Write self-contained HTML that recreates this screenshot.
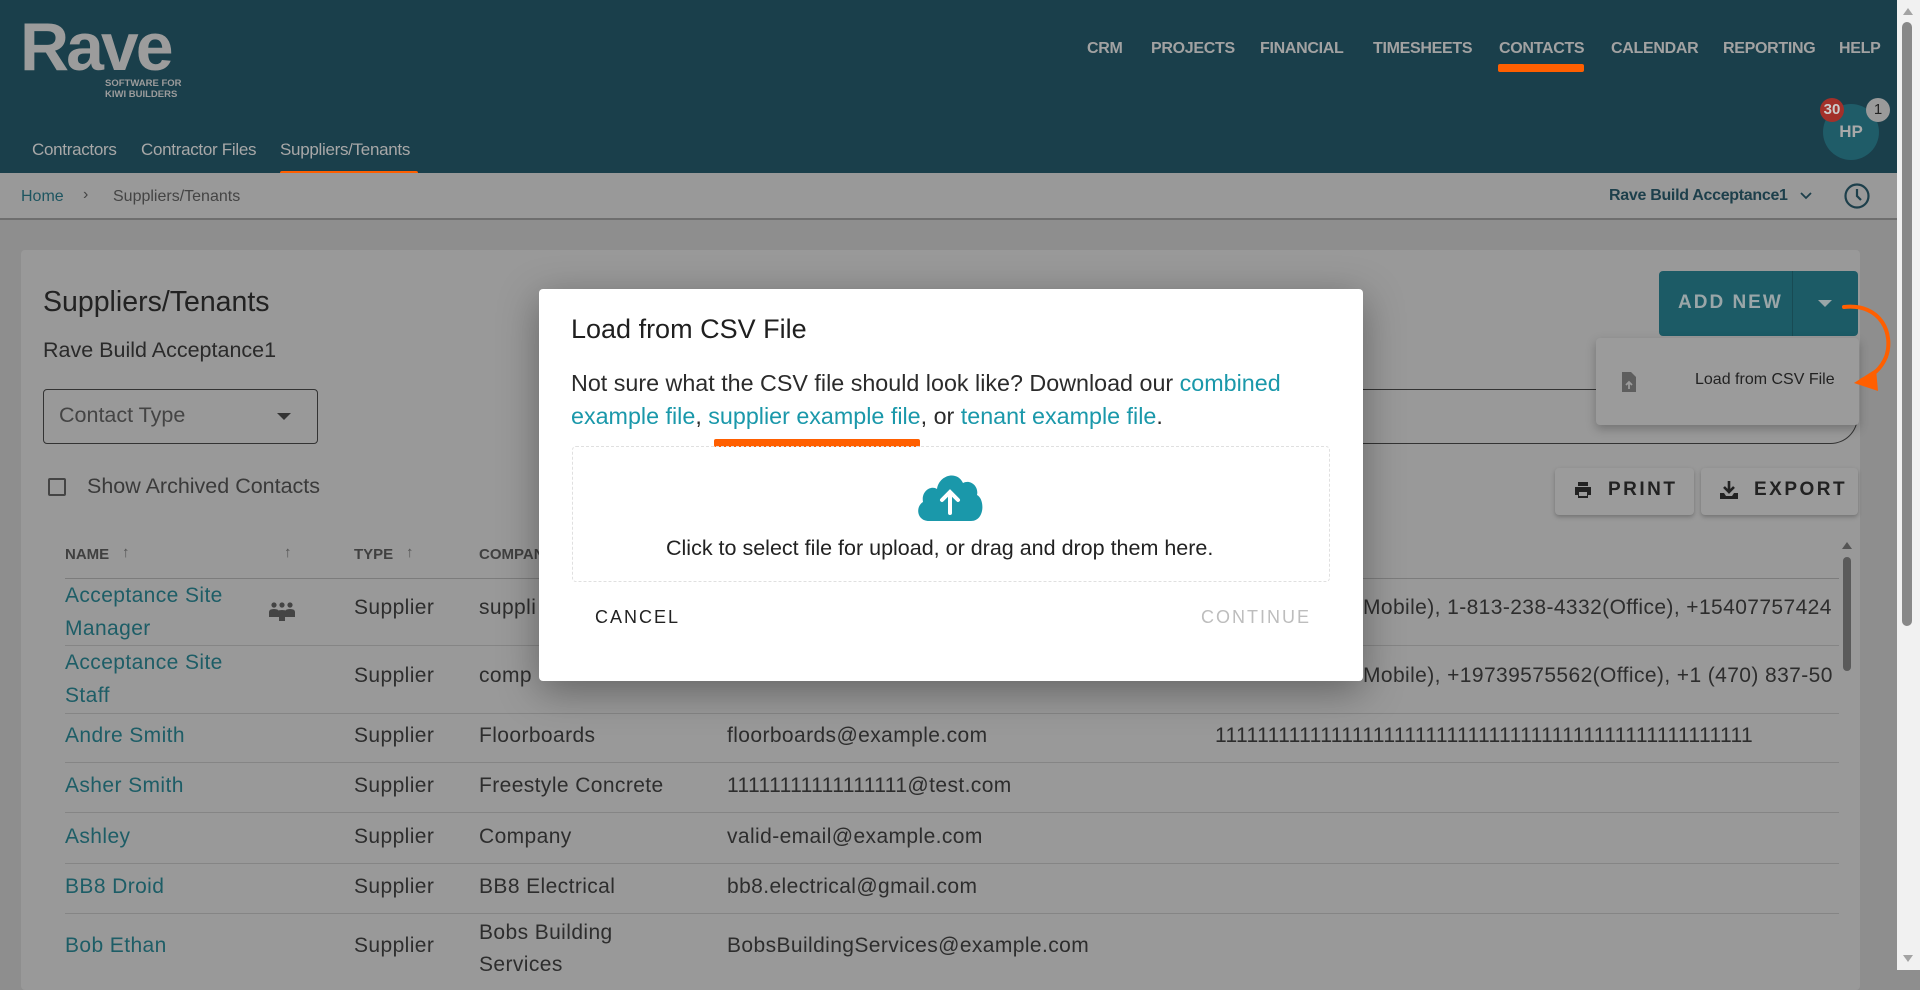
<!DOCTYPE html>
<html><head><meta charset="utf-8"><style>
*{margin:0;padding:0;box-sizing:border-box}
body{width:1920px;height:970px;overflow:hidden;background:#8e8e8e;font-family:"Liberation Sans",Arial,sans-serif;position:relative;color:#2b2b2b}
.a{position:absolute;white-space:nowrap}
.hdr{position:absolute;left:0;top:0;width:1897px;height:173px;background:#1a3f4b}
.nav{top:40px;font-size:16px;font-weight:bold;color:#a2a2a2;letter-spacing:-0.3px}
.sub{top:140px;font-size:17px;color:#a8a8a8;letter-spacing:-0.3px}
.bc{position:absolute;left:0;top:173px;width:1897px;height:47px;background:#999;border-bottom:2px solid #6e6e6e}
.card{position:absolute;left:21px;top:250px;width:1839px;height:740px;background:#999;border-radius:4px}
.th{top:546px;font-size:15px;font-weight:bold;color:#404040}
.ln{position:absolute;left:65px;width:1774px;height:1px;background:#858585}
.td{font-size:21px;letter-spacing:.4px;color:#2d2d2d}
.lk{font-size:21px;letter-spacing:.4px;color:#1d5d66}
.modal{position:absolute;left:539px;top:289px;width:824px;height:392px;background:#fff;border-radius:4px;box-shadow:0 10px 40px rgba(0,0,0,.35)}
.l{color:#1a98aa}
</style></head><body>
<div class="hdr"></div>
<div class="a" style="left:20px;top:8px;font-size:68px;font-weight:bold;color:#9c9c9c;letter-spacing:-3px">Rave</div>
<div class="a" style="left:105px;top:78px;font-size:9.5px;font-weight:bold;color:#9c9c9c;line-height:11px">SOFTWARE FOR<br>KIWI BUILDERS</div>
<div class="a nav" style="left:1087px">CRM</div>
<div class="a nav" style="left:1151px">PROJECTS</div>
<div class="a nav" style="left:1260px">FINANCIAL</div>
<div class="a nav" style="left:1373px">TIMESHEETS</div>
<div class="a nav" style="left:1499px">CONTACTS</div>
<div class="a nav" style="left:1611px">CALENDAR</div>
<div class="a nav" style="left:1723px">REPORTING</div>
<div class="a nav" style="left:1839px">HELP</div>
<div class="a" style="left:1498px;top:64px;width:86px;height:8px;background:#ff5f00;border-radius:2px"></div>
<div class="a" style="left:1823px;top:104px;width:56px;height:56px;border-radius:50%;background:#1f5c68;color:#a9a9a9;font-weight:bold;font-size:17px;text-align:center;line-height:56px">HP</div>
<div class="a" style="left:1820px;top:98px;width:24px;height:24px;border-radius:50%;background:#a3302a;color:#ccc;font-weight:bold;font-size:15px;text-align:center;line-height:24px">30</div>
<div class="a" style="left:1866px;top:98px;width:24px;height:24px;border-radius:50%;background:#9a9a9a;color:#222;font-size:15px;text-align:center;line-height:24px">1</div>
<div class="a sub" style="left:32px">Contractors</div>
<div class="a sub" style="left:141px">Contractor Files</div>
<div class="a sub" style="left:280px">Suppliers/Tenants</div>
<div class="a" style="left:280px;top:171px;width:138px;height:9px;background:#ff5f00;border-radius:2px"></div>
<div class="bc"></div>
<div class="a" style="left:21px;top:188px;font-size:16px;color:#1d5560">Home</div>
<div class="a" style="left:83px;top:186px;font-size:16px;color:#444">›</div>
<div class="a" style="left:113px;top:188px;font-size:16px;color:#444">Suppliers/Tenants</div>
<div class="a" style="left:1609px;top:187px;font-size:16px;font-weight:bold;color:#1d3f4b;letter-spacing:-0.3px">Rave Build Acceptance1</div>
<svg class="a" style="left:1799px;top:191px" width="14" height="10"><path d="M2 2l5 5 5-5" stroke="#1d3f4b" stroke-width="1.8" fill="none"/></svg>
<svg class="a" style="left:1843px;top:182px" width="28" height="28"><circle cx="14" cy="14" r="11.5" stroke="#1d3f4b" stroke-width="2.2" fill="none"/><path d="M14 7v7l4 4" stroke="#1d3f4b" stroke-width="2.2" fill="none"/></svg>
<div class="card"></div>
<div class="a" style="left:43px;top:286px;font-size:28.5px;color:#222">Suppliers/Tenants</div>
<div class="a" style="left:43px;top:338px;font-size:21.5px;color:#2a2a2a">Rave Build Acceptance1</div>
<div class="a" style="left:43px;top:389px;width:275px;height:55px;border:1.5px solid #333;border-radius:4px"></div>
<div class="a" style="left:59px;top:403px;font-size:21.5px;color:#444">Contact Type</div>
<svg class="a" style="left:276px;top:412px" width="16" height="10"><path d="M1 1h14l-7 7z" fill="#333"/></svg>
<div class="a" style="left:48px;top:478px;width:18px;height:18px;border:2px solid #444;border-radius:2px"></div>
<div class="a" style="left:87px;top:474px;font-size:21.5px;color:#3a3a3a">Show Archived Contacts</div>
<div class="a th" style="left:65px">NAME</div>
<div class="a th" style="left:122px;top:544px;font-weight:normal;color:#555">↑</div>
<div class="a th" style="left:284px;top:544px;font-weight:normal;color:#555">↑</div>
<div class="a th" style="left:354px">TYPE</div>
<div class="a th" style="left:406px;top:544px;font-weight:normal;color:#555">↑</div>
<div class="a th" style="left:479px">COMPANY</div>
<div class="ln" style="top:578px;background:#7c7c7c"></div>
<div class="ln" style="top:645px"></div><div class="ln" style="top:713px"></div><div class="ln" style="top:762px"></div><div class="ln" style="top:812px"></div><div class="ln" style="top:863px"></div><div class="ln" style="top:913px"></div>
<div class="a lk" style="left:65px;top:579px;line-height:33px">Acceptance Site<br>Manager</div>
<svg class="a" style="left:268px;top:601px" width="28" height="22"><circle cx="6" cy="4" r="2.6" fill="#444"/><circle cx="14" cy="4" r="2.6" fill="#444"/><circle cx="22" cy="4" r="2.6" fill="#444"/><path d="M1 11q0-3 5-3t5 3v5H1zM17 11q0-3 5-3t5 3v5H17z" fill="#444"/><path d="M8 12q0-3 6-3t6 3v4l-3 0v4h-6v-4H8z" fill="#444"/></svg>
<div class="a td" style="left:354px;top:596px">Supplier</div>
<div class="a td" style="left:479px;top:596px">suppli</div>
<div class="a td" style="left:1363px;top:596px">Mobile), 1-813-238-4332(Office), +15407757424</div>
<div class="a lk" style="left:65px;top:646px;line-height:33px">Acceptance Site<br>Staff</div>
<div class="a td" style="left:354px;top:664px">Supplier</div>
<div class="a td" style="left:479px;top:664px">comp</div>
<div class="a td" style="left:1363px;top:664px;width:476px;overflow:hidden">Mobile), +19739575562(Office), +1 (470) 837-50</div>
<div class="a lk" style="left:65px;top:724px">Andre Smith</div><div class="a td" style="left:354px;top:724px">Supplier</div><div class="a td" style="left:479px;top:724px">Floorboards</div><div class="a td" style="left:727px;top:724px">floorboards@example.com</div><div class="a td" style="left:1215px;top:724px;width:624px;overflow:hidden">111111111111111111111111111111111111111111111111111</div>
<div class="a lk" style="left:65px;top:774px">Asher Smith</div><div class="a td" style="left:354px;top:774px">Supplier</div><div class="a td" style="left:479px;top:774px">Freestyle Concrete</div><div class="a td" style="left:727px;top:774px">11111111111111111@test.com</div>
<div class="a lk" style="left:65px;top:825px">Ashley</div><div class="a td" style="left:354px;top:825px">Supplier</div><div class="a td" style="left:479px;top:825px">Company</div><div class="a td" style="left:727px;top:825px">valid-email@example.com</div>
<div class="a lk" style="left:65px;top:875px">BB8 Droid</div><div class="a td" style="left:354px;top:875px">Supplier</div><div class="a td" style="left:479px;top:875px">BB8 Electrical</div><div class="a td" style="left:727px;top:875px">bb8.electrical@gmail.com</div>
<div class="a lk" style="left:65px;top:934px">Bob Ethan</div><div class="a td" style="left:354px;top:934px">Supplier</div><div class="a td" style="left:479px;top:917px;line-height:32px">Bobs Building<br>Services</div><div class="a td" style="left:727px;top:934px">BobsBuildingServices@example.com</div>
<svg class="a" style="left:1841px;top:540px" width="12" height="10"><path d="M1 9h10L6 2z" fill="#555"/></svg>
<div class="a" style="left:1843px;top:557px;width:8px;height:114px;background:#5a5a5a;border-radius:4px"></div>
<div class="a" style="left:1360px;top:389px;width:498px;height:55px;border:1.5px solid #333;border-left:none;border-radius:0 28px 28px 0"></div>
<div class="a" style="left:1659px;top:271px;width:199px;height:65px;background:#1c5b66;border-radius:4px"></div>
<div class="a" style="left:1792px;top:271px;width:1px;height:65px;background:#184b54"></div>
<div class="a" style="left:1678px;top:292px;font-size:19px;font-weight:bold;letter-spacing:2px;color:#9aa6a8">ADD NEW</div>
<svg class="a" style="left:1817px;top:299px" width="16" height="9"><path d="M1 1h14l-7 7z" fill="#9aa6a8"/></svg>
<div class="a" style="left:1596px;top:338px;width:263px;height:87px;background:#9b9b9b;border-radius:4px;box-shadow:0 4px 10px rgba(0,0,0,.25)"></div>
<svg class="a" style="left:1620px;top:370px" width="18" height="24"><path d="M2 2h9l5 5v15H2z" fill="#5e5e5e"/><path d="M9 19v-6M6 15l3-3 3 3" stroke="#9b9b9b" stroke-width="1.8" fill="none"/></svg>
<div class="a" style="left:1695px;top:371px;font-size:16px;color:#222">Load from CSV File</div>
<div class="a" style="left:1555px;top:468px;width:139px;height:47px;background:#9b9b9b;border-radius:4px;box-shadow:0 2px 4px rgba(0,0,0,.25)"></div>
<div class="a" style="left:1701px;top:468px;width:157px;height:47px;background:#9b9b9b;border-radius:4px;box-shadow:0 2px 4px rgba(0,0,0,.25)"></div>
<svg class="a" style="left:1573px;top:480px" width="20" height="20"><path d="M5 2h10v4H5z M2 7h16v8h-3v3H5v-3H2z" fill="#222"/><rect x="6" y="12" width="8" height="4" fill="#9b9b9b"/></svg>
<div class="a" style="left:1608px;top:479px;font-size:19px;font-weight:bold;letter-spacing:2.5px;color:#222">PRINT</div>
<svg class="a" style="left:1718px;top:479px" width="22" height="22"><path d="M11 2v11M6 8l5 5 5-5" stroke="#222" stroke-width="2.6" fill="none"/><path d="M2 14h4l2 3h6l2-3h4v6H2z" fill="#222"/></svg>
<div class="a" style="left:1754px;top:479px;font-size:19px;font-weight:bold;letter-spacing:2.5px;color:#222">EXPORT</div>
<svg class="a" style="left:1830px;top:295px" width="70" height="110"><path d="M14 12 C52 8 64 40 56 62 C50 76 40 82 32 85" stroke="#ff5f00" stroke-width="4" fill="none" stroke-linecap="round"/><path d="M24 88l22-14 2 22z" fill="#ff5f00"/></svg>
<div class="a" style="left:1897px;top:0;width:23px;height:970px;background:#f1f1f1"></div>
<svg class="a" style="left:1902px;top:6px" width="12" height="10"><path d="M1 9h10L6 2z" fill="#a3a3a3"/></svg>
<svg class="a" style="left:1902px;top:954px" width="12" height="10"><path d="M1 1h10L6 8z" fill="#a3a3a3"/></svg>
<div class="a" style="left:1902px;top:22px;width:10px;height:604px;background:#888;border-radius:5px"></div>
<div class="modal"></div>
<div class="a" style="left:571px;top:314px;font-size:27px;color:#1f1f1f">Load from CSV File</div>
<div class="a" style="left:571px;top:367px;font-size:23.3px;line-height:33px;color:#2b2b2b">Not sure what the CSV file should look like? Download our <span class="l">combined</span><br><span class="l">example file</span>, <span class="l">supplier example file</span>, or <span class="l">tenant example file</span>.</div>
<div class="a" style="left:714px;top:439px;width:206px;height:8px;background:#ff5f00;border-radius:2px"></div>
<div class="a" style="left:572px;top:446px;width:758px;height:136px;border:1.5px dashed #e0e0e0;border-radius:4px"></div>
<svg class="a" style="left:915px;top:471px" width="70" height="52"><path d="M14 50 C2 50 0 36 8 31 C6 20 16 14 22 18 C24 4 42 -1 48 12 C56 8 64 16 62 24 C70 28 70 50 56 50 Z" fill="#1a98aa"/><path d="M35 42V22M27 29l8-8 8 8" stroke="#fff" stroke-width="4" fill="none" stroke-linecap="round"/></svg>
<div class="a" style="left:666px;top:536px;font-size:21.5px;color:#222">Click to select file for upload, or drag and drop them here.</div>
<div class="a" style="left:595px;top:607px;font-size:18px;letter-spacing:2px;color:#222">CANCEL</div>
<div class="a" style="left:1201px;top:607px;font-size:18px;letter-spacing:2px;color:#bdbdbd">CONTINUE</div>
</body></html>
